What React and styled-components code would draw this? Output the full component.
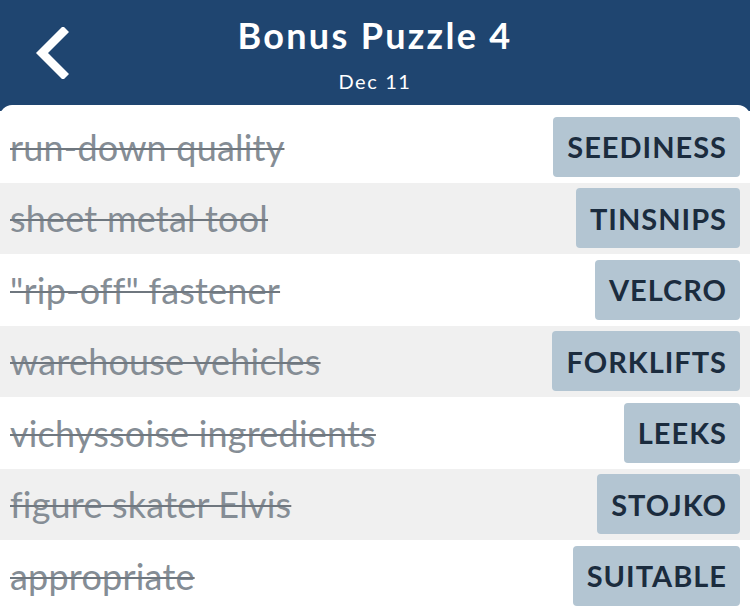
import React from "react";
import styled, { createGlobalStyle } from "styled-components";

const GlobalStyle = createGlobalStyle`
  html, body {
    margin: 0;
    padding: 0;
    background: #1f4570;
    overflow: hidden;
  }
  body {
    font-family: "Lato", "Noto Sans", sans-serif;
  }
`;

const clues = [
  { clue: "run-down quality", answer: "SEEDINESS" },
  { clue: "sheet metal tool", answer: "TINSNIPS" },
  { clue: "\"rip-off\" fastener", answer: "VELCRO" },
  { clue: "warehouse vehicles", answer: "FORKLIFTS" },
  { clue: "vichyssoise ingredients", answer: "LEEKS" },
  { clue: "figure skater Elvis", answer: "STOJKO" },
  { clue: "appropriate", answer: "SUITABLE" },
];

const App = () => {
  return (
    <Page>
      <GlobalStyle />
      <Header>
        <Back aria-label="back">
          <svg width="36" height="52" viewBox="0 0 36 52">
            <path
              d="M30 5 L9 26 L30 47"
              fill="none"
              stroke="#fff"
              strokeWidth="8.5"
              strokeLinecap="square"
              strokeLinejoin="miter"
            />
          </svg>
        </Back>
        <Title>Bonus Puzzle 4</Title>
        <Date>Dec 11</Date>
      </Header>
      <Card>
        {clues.map((item, i) => (
          <Row key={item.answer} shaded={i % 2 === 1}>
            <Clue>{item.clue}</Clue>
            <Tile>{item.answer}</Tile>
          </Row>
        ))}
      </Card>
    </Page>
  );
};

export default App;

const Page = styled.div`
  width: 750px;
  height: 611px;
  display: flex;
  flex-direction: column;
  background: #1f4570;
  overflow: hidden;
`;

const Header = styled.div`
  position: relative;
  height: 105px;
  display: flex;
  flex-direction: column;
  align-items: center;
  color: #fff;
  flex-shrink: 0;
`;

const Back = styled.div`
  position: absolute;
  left: 33px;
  top: 27px;
  line-height: 0;
`;

const Title = styled.div`
  font-weight: 700;
  font-size: 36px;
  line-height: 40px;
  margin-top: 15px;
  letter-spacing: 2.3px;
`;

const Date = styled.div`
  font-size: 20px;
  line-height: 24px;
  margin-top: 14px;
  letter-spacing: 1.6px;
`;

const Card = styled.div`
  flex: 1;
  background: #fff;
  border-radius: 12px 12px 0 0;
  padding-top: 6px;
  display: flex;
  flex-direction: column;
`;

const Row = styled.div`
  height: 71.5px;
  flex-shrink: 0;
  display: flex;
  align-items: center;
  justify-content: space-between;
  padding: 0 10px;
  box-sizing: border-box;
  background: ${(p) => (p.shaded ? "#f0f0f0" : "#fff")};
`;

const Clue = styled.div`
  font-size: 36px;
  line-height: 44px;
  color: #858d95;
  letter-spacing: 0.2px;
  text-decoration: line-through;
  text-decoration-thickness: 2px;
  text-decoration-color: #6f777f;
  white-space: nowrap;
`;

const Tile = styled.div`
  height: 60px;
  display: flex;
  align-items: center;
  padding: 0 13px 0 14px;
  background: #b3c5d2;
  border-radius: 4px;
  font-weight: 700;
  font-size: 29px;
  letter-spacing: 1px;
  color: #1b2c3e;
`;
